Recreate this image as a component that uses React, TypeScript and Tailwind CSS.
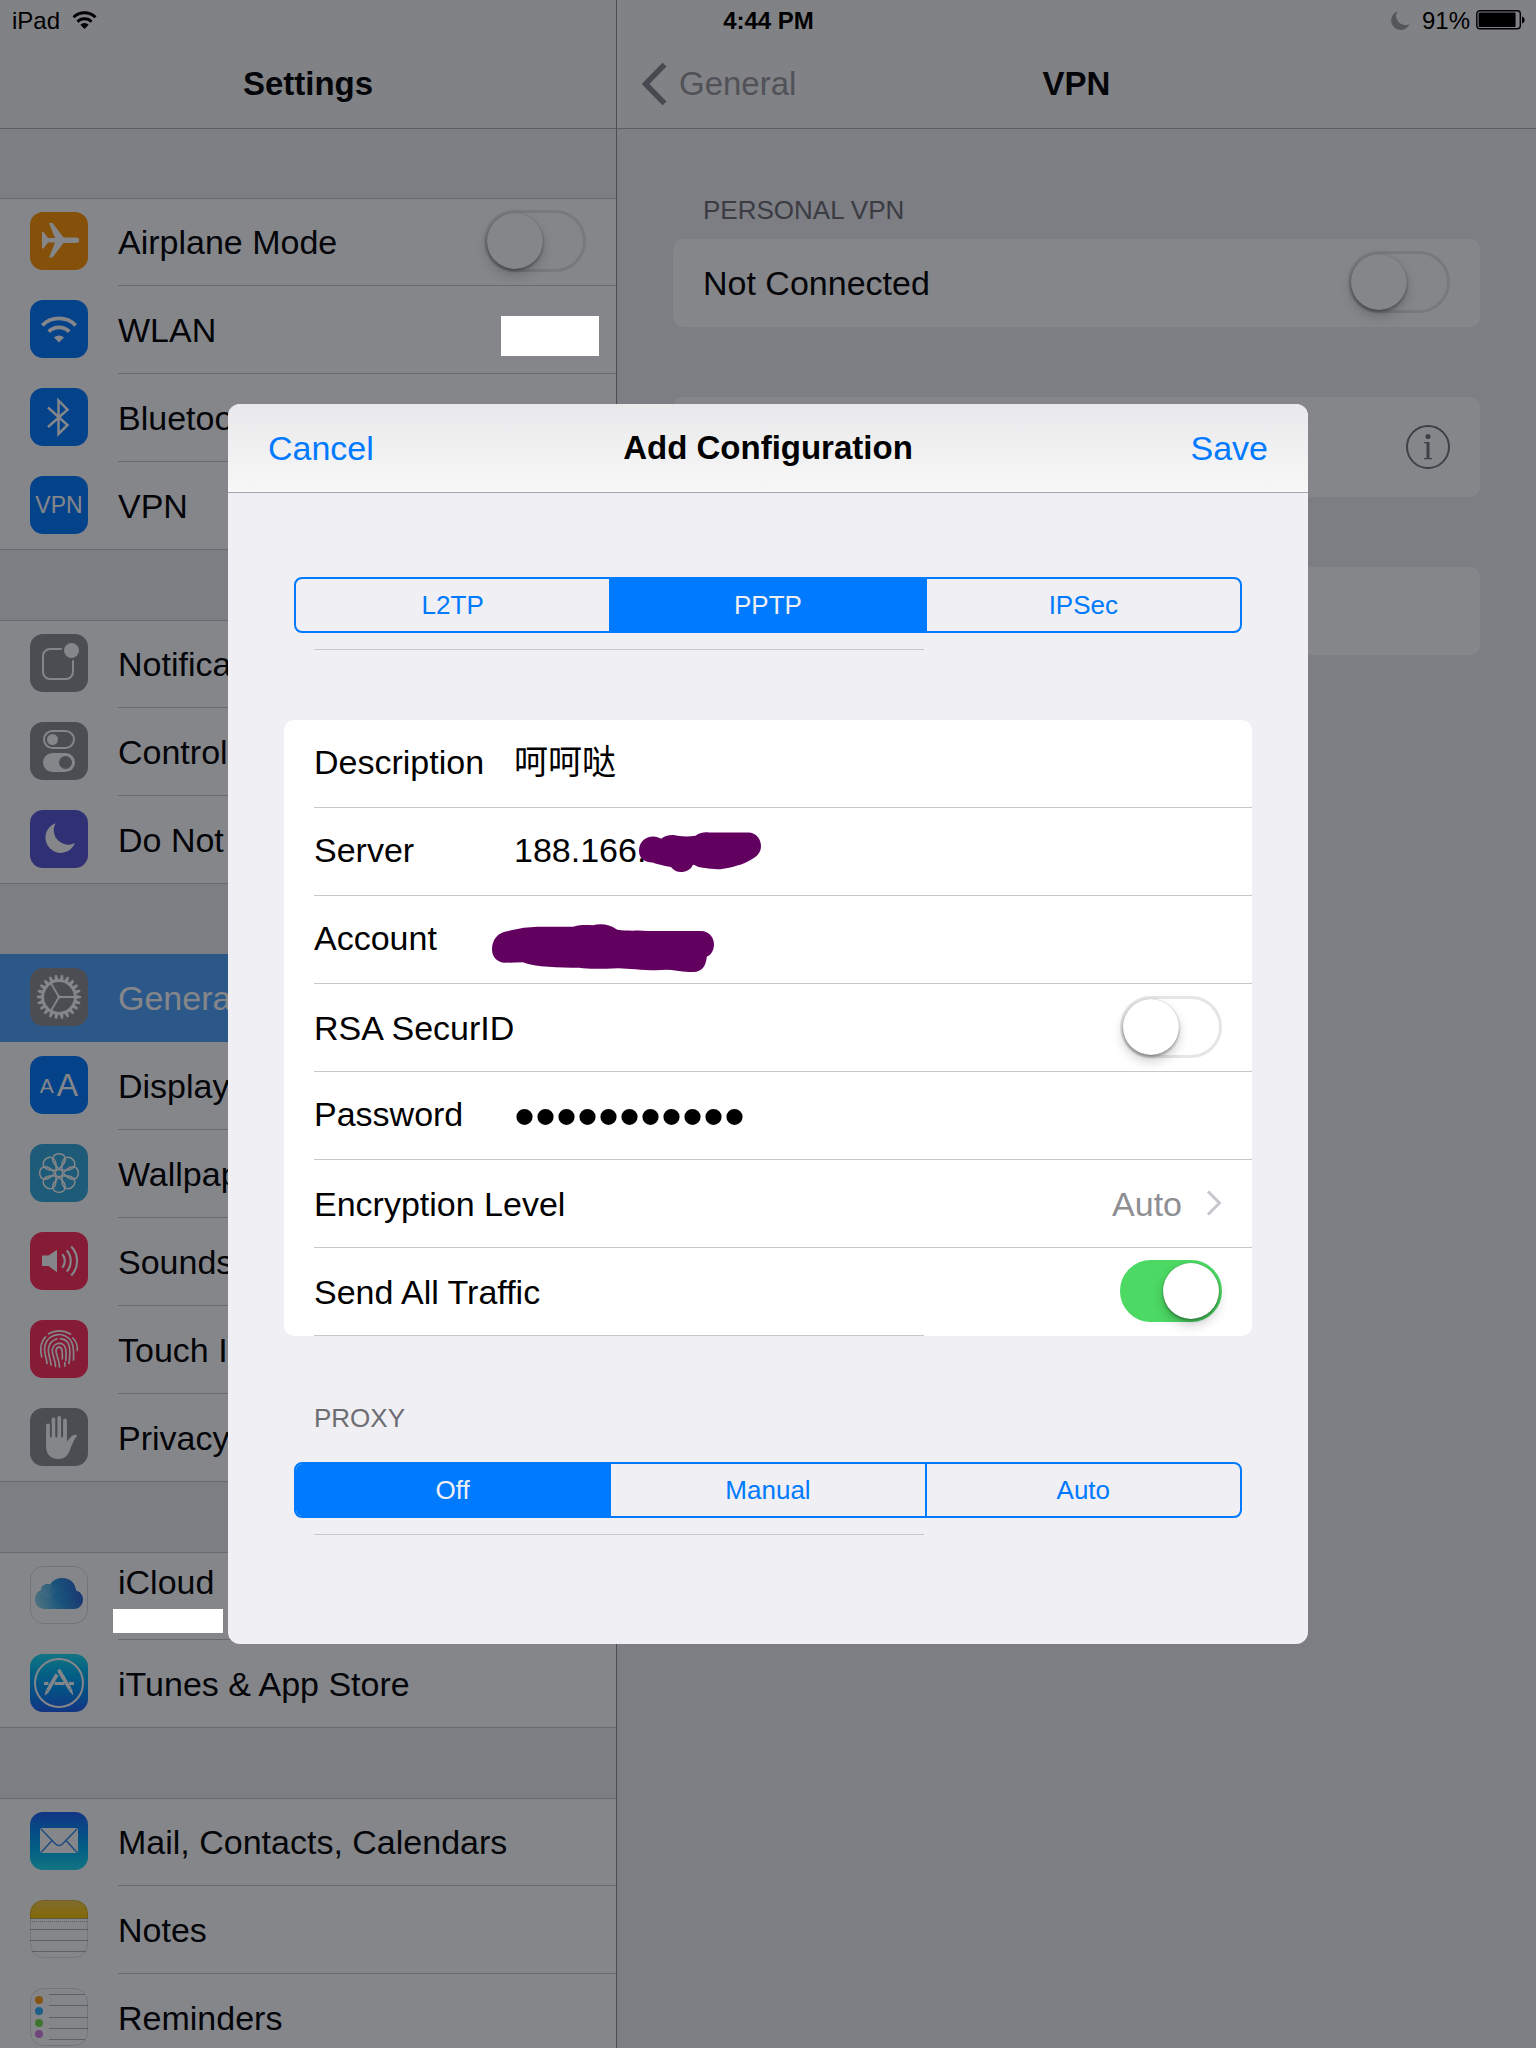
import { useId, useState, type ReactNode } from "react";

const BODY_TEXT = "text-[34px] leading-[40px]";

/* ---------- icons ---------- */

function Glyph({ children }: { children: ReactNode }) {
  return (
    <svg viewBox="0 0 58 58" className="size-full" fill="none" stroke="none" aria-hidden="true">
      {children}
    </svg>
  );
}

const airplane = (
  <Glyph>
    <path
      fill="#fff"
      d="M12 20h1.500l4.500 6H25L19 11h3.500L33.500 25.500H46.500a2.700 2.700 0 0 1 0 5.400H33.500L22.500 45.500H19L25 30.500h-7l-4.500 6H12z"
    />
  </Glyph>
);

const wifi = (
  <Glyph>
    <g stroke="#fff" strokeWidth="3.800">
      <path d="M12.300 25.300A23.600 23.600 0 0 1 45.700 25.300" />
      <path d="M18.700 31.700A14.600 14.600 0 0 1 39.300 31.700" />
    </g>
    <path fill="#fff" d="M29 42.500l-5-5a7.500 7.500 0 0 1 10 0z" />
  </Glyph>
);

const bluetooth = (
  <Glyph>
    <path stroke="#fff" strokeWidth="2.500" d="M18 19.500L37.500 37 28.500 46V12.500L37.500 21.700 18 39" />
  </Glyph>
);

const notifications = (
  <Glyph>
    <rect x="13" y="15" width="30" height="30" rx="7" stroke="#fff" strokeWidth="2" />
    <circle cx="41.500" cy="16.500" r="10" fill="#8e8e93" />
    <circle cx="41.500" cy="16.500" r="7.500" fill="#fff" />
  </Glyph>
);

const control = (
  <Glyph>
    <rect x="14" y="9" width="30" height="17" rx="8.500" stroke="#fff" strokeWidth="2" />
    <circle cx="22.500" cy="17.500" r="5.500" fill="#fff" />
    <rect x="13" y="31" width="32" height="19" rx="9.500" fill="#fff" />
    <circle cx="35.500" cy="40.500" r="6.500" fill="#8e8e93" />
  </Glyph>
);

const moon = (
  <Glyph>
    <path fill="#fff" d="M25.500 13.200A15.300 15.300 0 1 0 45 33 A14.500 14.500 0 0 1 25.500 13.200z" />
  </Glyph>
);

const TEETH = Array.from({ length: 22 }, (_, i) => ((i + 0.5) * 360) / 22);

const gear = (
  <Glyph>
    <circle cx="29" cy="29" r="16.300" stroke="#fff" strokeWidth="2.800" />
    <g fill="#fff">
      {TEETH.map((a) => (
        <path key={a} d="M26.900 12.200L28 6.900h2L31.100 12.200z" transform={`rotate(${a} 29 29)`} />
      ))}
    </g>
    <path stroke="#fff" strokeWidth="1.800" d="M29 29h16M29 29L21 15.200M29 29L21 42.800" />
    <circle cx="29" cy="29" r="1.800" fill="#fff" />
  </Glyph>
);

const flower = (
  <Glyph>
    <g stroke="#fff" strokeWidth="1.500" strokeLinejoin="round">
      {[0, 45, 90, 135, 180, 225, 270, 315].map((a) => (
        <path
          key={a}
          transform={`rotate(${a} 29 29)`}
          d="M29 25L24.600 20.200C20.700 15 23.300 9.700 29 9.700S37.300 15 33.400 20.200z"
        />
      ))}
      <circle cx="29" cy="29" r="3.600" />
    </g>
  </Glyph>
);

const speaker = (
  <Glyph>
    <path fill="#fff" d="M12 23.500h6.500L27 17.800v22.400L18.500 34H12z" />
    <g stroke="#fff" strokeWidth="2.200">
      <path d="M32.300 22.300C35.600 26 35.600 32 32.300 35.700" />
      <path d="M36.700 18.500C42 24 42 34 36.700 39.500" />
      <path d="M41.200 14.500C49 22.500 49 35.500 41.200 43.500" />
    </g>
  </Glyph>
);

const fingerprint = (
  <Glyph>
    <g stroke="#fff" strokeWidth="1.700" strokeLinecap="round">
      <path d="M18.500 13.800C25 9.800 33.500 9.800 40.500 14" />
      <path d="M11.700 37C9.800 29.500 10.500 22 15.500 16.800" />
      <path d="M42.800 18C46.500 21.500 47.800 25.500 47.300 30.500" />
      <path d="M17 43.500C16.800 38 13.500 33 14.800 26C18.500 11.500 37 11 42 23C44 28 43.800 34 43.500 40" />
      <path d="M21 45C20.500 38 17.500 34 18.500 28C19.800 22.500 23 20 27 18.800" />
      <path d="M30.500 18.600C36.500 19.300 39.500 23.500 39.800 29C40 34 39.800 39 39 43.500" />
      <path d="M25.500 46.500C25.500 39.500 22 35 22.300 30C23 22 34.500 20.500 35.800 29.500C36.500 34.500 36 38 35.800 40.500" />
      <path d="M29.500 47C29.500 40 26 35 26 30.500C26.500 26 31.500 26 32 30.500C32.500 34 32.500 36 32.300 39" />
      <path d="M34.800 42.500V46" />
    </g>
  </Glyph>
);

const hand = (
  <Glyph>
    <g stroke="#fff" strokeWidth="3.800" strokeLinecap="round">
      <path d="M18 32V17.500M23.500 30V11.500M29.200 30V10M35 30V12.500" />
    </g>
    <path
      fill="#fff"
      d="M16.100 28H36.900V33.500L41.500 28.300C43.500 26.600 46 26.300 47.300 27.700C44.800 29.500 43.800 33.500 41 39C38.500 47 35.500 51 28.500 51C19.500 51 16.100 45.500 16.100 38z"
    />
    <path stroke="#8e8e93" strokeWidth="1.700" d="M20.800 16v13.500M26.400 12v17.500M32.100 12v17.500" />
  </Glyph>
);

const cloud = (
  <Glyph>
    <defs>
      <linearGradient id="cloud-fill" x1="0" y1="0.600" x2="1" y2="0.400">
        <stop offset="0" stopColor="#8fd4ee" />
        <stop offset="0.450" stopColor="#32a4e4" />
        <stop offset="1" stopColor="#2a5cd0" />
      </linearGradient>
    </defs>
    <rect x="0.500" y="0.500" width="57" height="57" rx="13" fill="#fff" stroke="#d9d9dc" />
    <path
      fill="url(#cloud-fill)"
      d="M14.500 43C9 43 5 38.500 5 33.500C5 28.500 7.500 25.500 11 24.300C11 19.500 15 17 20.300 18.400C22 14.500 27 12 32 12C40 12 45.500 17 46 24.500C50 25.500 53 29 53 33.500C53 39 49 43 44 43z"
    />
    <circle cx="18" cy="25" r="7" fill="#fff" fillOpacity="0.100" />
    <circle cx="32.500" cy="25" r="13" fill="#1c88e0" fillOpacity="0.200" />
  </Glyph>
);

const appStore = (
  <Glyph>
    <circle cx="29" cy="29" r="24" stroke="#fff" strokeWidth="2" />
    <path stroke="#fff" strokeWidth="3" d="M14 29.500h4.500M24.500 29.500h10M39 29.500h5" />
    <g stroke="#fff" strokeWidth="3.600">
      <path strokeLinecap="round" d="M29.300 17L33 23.300" />
      <path d="M32 21.500L40 35.200M27 20.500L17.800 36.300" />
    </g>
    <path fill="#fff" d="M16 35.700l3.500 2-5 4zM38.500 36.500l3.500-2 1.300 7z" />
  </Glyph>
);

const envelope = (
  <Glyph>
    <rect x="10" y="16" width="38" height="25" rx="2" fill="#fff" />
    <path
      stroke="#2a86ea"
      strokeWidth="1.400"
      d="M11 17L25.500 32C27.500 34 30.500 34 32.500 32L47 17M11 40.500L21.500 29M47 40.500L36.500 29"
    />
  </Glyph>
);

const notes = (
  <Glyph>
    <defs>
      <clipPath id="notes-clip">
        <rect width="58" height="58" rx="13" />
      </clipPath>
      <linearGradient id="notes-top" x1="0" y1="0" x2="0" y2="1">
        <stop offset="0" stopColor="#f5cd4a" />
        <stop offset="1" stopColor="#fbc400" />
      </linearGradient>
    </defs>
    <g clipPath="url(#notes-clip)">
      <path fill="#fff" d="M0 0h58v58H0z" />
      <path fill="url(#notes-top)" d="M0 0h58v18H0z" />
      <path stroke="#b5a26a" d="M0 18.500h58" />
      <path stroke="#b0b0b4" strokeDasharray="1 1" d="M0 21.500h58" />
      <path stroke="#b4b4b8" d="M0 29.500h58M0 40.500h58M0 51.500h58" />
    </g>
    <rect x="0.500" y="0.500" width="57" height="57" rx="13" stroke="#000" strokeOpacity="0.120" />
  </Glyph>
);

const reminders = (
  <Glyph>
    <rect x="0.500" y="0.500" width="57" height="57" rx="13" fill="#fff" stroke="#d9d9dc" />
    <path stroke="#b4b4b8" d="M19 6.500h36M19 17.500h39M19 29.500h39M19 40.500h39M19 51.500h36" />
    <g fillOpacity="0.900">
      <circle cx="9" cy="12" r="4" fill="#ff9500" />
      <circle cx="9" cy="23" r="4" fill="#1badf8" />
      <circle cx="9" cy="35" r="4" fill="#63da38" />
      <circle cx="9" cy="46" r="4" fill="#cc73e1" />
    </g>
  </Glyph>
);

/* ---------- controls ---------- */

function Toggle({ id, on = false }: { id?: string; on?: boolean }) {
  return (
    <input
      id={id}
      type="checkbox"
      role="switch"
      defaultChecked={on}
      className="mb-0.5 h-[62px] w-[102px] shrink-0 appearance-none rounded-full border-3 border-[#e5e5e5] bg-white before:block before:size-14 before:rounded-full before:bg-white before:shadow-[0_6px_12px_rgba(0,0,0,0.2),0_2px_3px_rgba(0,0,0,0.3),0_0_1px_rgba(0,0,0,0.3)] before:content-[''] checked:border-[#4cd964] checked:bg-[#4cd964] checked:before:ml-10"
    />
  );
}

function Segmented({ name, options, initial }: { name: string; options: string[]; initial: string }) {
  const [value, setValue] = useState(initial);
  return (
    <fieldset className="relative h-[88px] px-2.5 pt-[15px]" aria-label={name}>
      <div className="flex h-14 overflow-hidden rounded-lg border-2 border-[#007aff]">
        {options.map((o) => (
          <label
            key={o}
            className="flex flex-1 items-center justify-center border-r-2 border-[#007aff] text-[26px] leading-8 text-[#007aff] last:border-r-0 has-checked:bg-[#007aff] has-checked:text-[#efeff4]"
          >
            <input
              type="radio"
              name={name}
              value={o}
              checked={value === o}
              onChange={() => setValue(o)}
              className="sr-only"
            />
            {o}
          </label>
        ))}
      </div>
      <div className="absolute bottom-0 left-[30px] h-px w-[63%] bg-[#c8c7cc]" />
    </fieldset>
  );
}

/* ---------- sidebar ---------- */

type Item = {
  label: string;
  icon: ReactNode;
  tile: string;
  selected?: boolean;
  extra?: "toggle" | "network" | "account";
};

const GREY = "bg-[#8e8e93]";
const BLUE = "bg-[#007aff]";
const RED = "bg-[#ff2d55]";

const GROUPS: Item[][] = [
  [
    { label: "Airplane Mode", icon: airplane, tile: "bg-[#ff9500]", extra: "toggle" },
    { label: "WLAN", icon: wifi, tile: BLUE, extra: "network" },
    { label: "Bluetooth", icon: bluetooth, tile: BLUE },
    { label: "VPN", icon: <span className="text-[23px] leading-none text-white">VPN</span>, tile: BLUE },
  ],
  [
    { label: "Notifications", icon: notifications, tile: GREY },
    { label: "Control Center", icon: control, tile: GREY },
    { label: "Do Not Disturb", icon: moon, tile: "bg-[#5856d6]" },
  ],
  [
    { label: "General", icon: gear, tile: GREY, selected: true },
    {
      label: "Display & Brightness",
      icon: (
        <span className="flex items-center gap-[3px] text-white">
          <span className="text-[21px] leading-none">A</span>
          <span className="text-[32px] leading-none">A</span>
        </span>
      ),
      tile: BLUE,
    },
    { label: "Wallpaper", icon: flower, tile: "bg-[#34aadc]" },
    { label: "Sounds", icon: speaker, tile: RED },
    { label: "Touch ID & Passcode", icon: fingerprint, tile: RED },
    { label: "Privacy", icon: hand, tile: GREY },
  ],
  [
    { label: "iCloud", icon: cloud, tile: "", extra: "account" },
    { label: "iTunes & App Store", icon: appStore, tile: "bg-linear-to-b from-[#1cdcf0] to-[#1d5ef2]" },
  ],
  [
    { label: "Mail, Contacts, Calendars", icon: envelope, tile: "bg-linear-to-b from-[#1d5ef2] to-[#1cdcf0]" },
    { label: "Notes", icon: notes, tile: "" },
    { label: "Reminders", icon: reminders, tile: "" },
  ],
];

function SidebarRow({ item, last }: { item: Item; last: boolean }) {
  const toggleId = useId();
  const body = (
    <>
      <span
        className={`mx-[30px] mt-[14px] flex size-[58px] shrink-0 items-center justify-center overflow-hidden rounded-[13px] ${item.tile}`}
      >
        {item.icon}
      </span>
      <span
        className={`flex h-[88px] min-w-0 flex-1 justify-between ${last || item.selected ? "" : "border-b border-[#c8c7cc]"} ${item.extra === "account" ? "items-start pt-2.5" : "items-center"}`}
      >
        <span className={`truncate ${BODY_TEXT}`}>{item.label}</span>
        {item.extra === "toggle" && (
          <span className="mr-[30px] flex">
            <Toggle id={toggleId} />
          </span>
        )}
        {item.extra === "network" && <span className="relative z-20 mt-3 mr-[17px] h-10 w-[98px] bg-white" />}
      </span>
      {item.extra === "account" && <span className="absolute top-[57px] left-[113px] z-20 h-6 w-[110px] bg-white" />}
    </>
  );
  const cls = `relative flex h-[88px] ${last ? "border-b border-[#c8c7cc]" : ""} ${item.selected ? "bg-[#4da4fd] text-white" : ""}`;
  return (
    <li>
      {item.extra === "toggle" ? (
        <label htmlFor={toggleId} className={cls}>
          {body}
        </label>
      ) : (
        <a href="#" className={cls}>
          {body}
        </a>
      )}
    </li>
  );
}

function Sidebar() {
  return (
    <nav className="min-w-0 border-r border-[#909094] bg-[#efeff4]">
      <h1 className="flex h-[129px] items-center justify-center border-b border-[#b0b0b3] bg-[#f7f7f8] pt-10 text-[33px] leading-10 font-bold">
        Settings
      </h1>
      <div className="flex flex-col gap-[70px] pt-[69px]">
        {GROUPS.map((g) => (
          <ul key={g[0].label} className="bg-white shadow-[inset_0_1px_0_#c8c7cc]">
            {g.map((item, i) => (
              <SidebarRow key={item.label} item={item} last={i === g.length - 1} />
            ))}
          </ul>
        ))}
      </div>
    </nav>
  );
}

/* ---------- detail pane ---------- */

function Detail() {
  return (
    <main className="min-w-0 bg-[#efeff4]">
      <div className="grid h-[129px] grid-cols-3 items-center border-b border-[#b0b0b3] bg-[#f7f7f8] pt-10">
        <a href="#" className="flex items-center gap-3 pl-6 text-[33px] leading-10 text-[#98989c]">
          <svg
            viewBox="0 0 26 42"
            className="h-[42px] w-[26px] text-[#87878c]"
            fill="none"
            stroke="currentColor"
            strokeWidth="5.500"
            aria-hidden="true"
          >
            <path d="M23.500 1.500L4.500 21 23.500 40.500" />
          </svg>
          General
        </a>
        <h2 className="text-center text-[33px] leading-10 font-bold">VPN</h2>
      </div>
      <div className="px-14">
        <h3 className="flex h-[110px] items-end px-[30px] pb-[13px] text-[26px] leading-8 text-[#6d6d72]">
          PERSONAL VPN
        </h3>
        <label className={`flex h-[88px] items-center justify-between rounded-[10px] bg-white px-[30px] ${BODY_TEXT}`}>
          Not Connected
          <Toggle />
        </label>
        <div className="mt-[70px] flex h-[100px] items-center justify-end rounded-[10px] bg-white px-[30px]">
          <button type="button" aria-label="More info" className="text-[#77777c]">
            <svg viewBox="0 0 44 44" className="size-11" fill="none" stroke="currentColor" strokeWidth="2" aria-hidden="true">
              <circle cx="22" cy="22" r="21" />
              <circle cx="22" cy="11.500" r="2.600" fill="currentColor" stroke="none" />
              <path fill="currentColor" stroke="none" d="M18 17h5.500v16h2.500v1.300h-8V33h2.500V18.300H18z" />
            </svg>
          </button>
        </div>
        <div className="mt-[70px] h-[88px] rounded-[10px] bg-white" />
      </div>
    </main>
  );
}

/* ---------- status bar ---------- */

function StatusBar() {
  return (
    <header className="absolute inset-x-0 top-0 z-20 grid h-[42px] grid-cols-3 items-center pr-[11px] pl-3 text-[24px] leading-7">
      <div className="flex items-center gap-3">
        iPad
        <svg viewBox="0 0 25 18" className="mb-0.5 h-[18px] w-[25px]" fill="none" stroke="#000" strokeWidth="3" aria-hidden="true">
          <path d="M1.500 6.300a15.600 15.600 0 0 1 22 0" />
          <path d="M5.500 10.700a9.800 9.800 0 0 1 14 0" />
          <path fill="#000" stroke="none" d="M12.500 18l-4.200-4.300a6 6 0 0 1 8.400 0z" />
        </svg>
      </div>
      <time className="text-center font-bold">4:44 PM</time>
      <div className="flex items-center justify-end">
        <svg viewBox="0 0 19 19" className="mr-3 mb-0.5 size-[19px]" fill="#55565a" aria-hidden="true">
          <path d="M6.500 0.500A9.500 9.500 0 1 0 18.500 13 A9 9 0 0 1 6.500 0.500z" />
        </svg>
        <span className="mr-1.5">91%</span>
        <svg viewBox="0 0 49 20" className="mb-0.5 h-5 w-[49px]" aria-hidden="true">
          <rect x="0.800" y="0.800" width="43.500" height="18" rx="3" fill="none" stroke="#000" strokeWidth="1.400" />
          <rect x="2.600" y="2.500" width="37" height="14.600" rx="1" />
          <path d="M46 6.500c3.500 1 3.500 6 0 7z" />
        </svg>
      </div>
    </header>
  );
}

/* ---------- dialog ---------- */

const FIELD = "flex h-[88px] items-center border-b border-[#c8c7cc]";
const INPUT = "min-w-0 flex-1 bg-transparent outline-none";

function Dialog() {
  return (
    <section
      role="dialog"
      aria-label="Add Configuration"
      className={`w-full max-w-[1080px] overflow-hidden rounded-xl bg-[#efeff4] ${BODY_TEXT}`}
    >
      <header className="grid h-[89px] grid-cols-[1fr_auto_1fr] items-center border-b border-[#a7a7aa] bg-linear-to-b from-[#e9e9eb] to-[#f7f7f8] px-10">
        <button type="button" className="justify-self-start text-[#007aff]">
          Cancel
        </button>
        <h2 className="text-[33px] font-bold">Add Configuration</h2>
        <button type="button" className="justify-self-end text-[#007aff]">
          Save
        </button>
      </header>
      <form className="px-14 pt-[69px] pb-[109px]">
        <Segmented name="VPN type" options={["L2TP", "PPTP", "IPSec"]} initial="PPTP" />
        <div className="relative mt-[70px] rounded-[10px] bg-white pl-[30px]">
          <div className={`${FIELD} pb-1`}>
            <label htmlFor="description" className="w-[200px]">
              Description
            </label>
            <input id="description" defaultValue="呵呵哒" className={INPUT} />
          </div>
          <div className={`${FIELD} relative pb-1`}>
            <label htmlFor="server" className="w-[200px]">
              Server
            </label>
            <input id="server" defaultValue="188.166." className={INPUT} />
            <svg
              viewBox="0 0 307 105"
              preserveAspectRatio="none"
              className="absolute top-6 left-[325px] h-10 w-[122px]"
              fill="#620060"
              aria-hidden="true"
            >
              <path d="M0 50C0 26 16 12 36 12C44 12 50 15 56 18C64 9 84 5 97 10C115 13 130 12 142 10C154 1 165 0 175 1L275 1C295 1 307 18 307 37C307 54 297 65 283 72C262 86 235 92 205 98C185 98 160 94 150 92C142 89 138 84 135 87C130 100 116 105 104 105C92 105 86 98 80 92C60 88 45 84 34 80C15 80 0 70 0 50Z" />
            </svg>
          </div>
          <div className={`${FIELD} relative pb-1`}>
            <label htmlFor="account" className="w-[200px]">
              Account
            </label>
            <input id="account" className={INPUT} />
            <svg
              viewBox="0 0 560 124"
              preserveAspectRatio="none"
              className="absolute top-7 left-[178px] h-12 w-[222px]"
              fill="#620060"
              aria-hidden="true"
            >
              <path d="M0 66C0 40 16 22 38 19C70 10 90 8 115 7L205 7C225 1 240 3 255 3C272 -2 296 -1 316 15C335 17 350 18 370 17C400 19 430 18 460 18L527 18C548 18 560 36 560 52C560 68 552 80 542 84C540 108 530 124 508 124C480 125 460 118 440 118C400 122 350 115 320 114C280 115 250 118 220 113C170 113 110 112 78 99L30 100C12 98 0 84 0 66Z" />
            </svg>
          </div>
          <label className={`${FIELD} justify-between pr-[30px]`}>
            RSA SecurID
            <Toggle />
          </label>
          <div className={`${FIELD} pb-1`}>
            <label htmlFor="password" className="w-[200px]">
              Password
            </label>
            <input
              id="password"
              type="password"
              defaultValue="secretvalue"
              className={`${INPUT} pt-1.5 text-[60px] leading-[60px]`}
            />
          </div>
          <button type="button" className={`${FIELD} w-full justify-between pr-[30px]`}>
            Encryption Level
            <span className="flex items-center gap-6 text-[#8e8e93]">
              Auto
              <svg
                viewBox="0 0 16 26"
                className="mb-0.5 h-[26px] w-4"
                fill="none"
                stroke="#c7c7cc"
                strokeWidth="3"
                aria-hidden="true"
              >
                <path d="M2 1.500L13.500 13 2 24.500" />
              </svg>
            </span>
          </button>
          <label className="flex h-[88px] items-center justify-between pr-[30px]">
            Send All Traffic
            <Toggle on />
          </label>
          <div className="absolute bottom-0 left-[30px] h-px w-[63%] bg-[#c8c7cc]" />
        </div>
        <h3 className="flex h-[111px] items-end px-[30px] pb-[13px] text-[26px] leading-8 text-[#6d6d72]">PROXY</h3>
        <Segmented name="Proxy" options={["Off", "Manual", "Auto"]} initial="Off" />
      </form>
    </section>
  );
}

export default function App() {
  return (
    <div className="relative h-screen overflow-hidden font-['Liberation_Sans','Noto_Sans_CJK_SC',sans-serif] text-black">
      <div className="grid min-h-full grid-cols-[617fr_919fr]">
        <Sidebar />
        <Detail />
      </div>
      <div className="absolute inset-0 z-10 bg-[rgba(8,10,18,0.495)]" />
      <StatusBar />
      <div className="absolute inset-0 z-30 flex items-center justify-center">
        <Dialog />
      </div>
    </div>
  );
}
